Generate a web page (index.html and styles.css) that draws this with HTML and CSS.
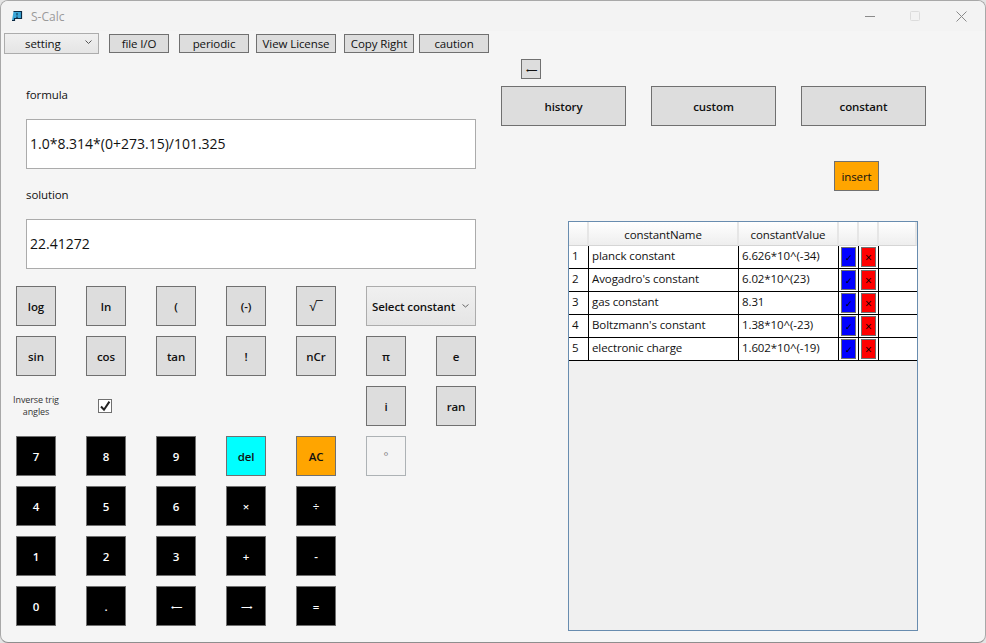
FILE: index.html
```html
<!DOCTYPE html>
<html lang="en">
<head>
<meta charset="utf-8">
<title>S-Calc</title>
<link rel="stylesheet" href="styles.css">
</head>
<body>
<div class="window">
  <header class="titlebar">
    <div class="title-left">
      <svg class="app-icon" width="12" height="12" viewBox="0 0 12 12"><path d="M2.5 1.5h8v7h-7v2H1" fill="#3aa6d8" stroke="#0b2a44" stroke-width="1.2"/><path d="M6 3v2.5M5 7.2h2" stroke="#0b2a44" stroke-width="1" fill="none"/></svg>
      <span class="title-text">S-Calc</span>
    </div>
    <div class="controls">
      <svg class="ctl ctl-min" width="10" height="10" viewBox="0 0 10 10"><path d="M0 5.5h10" stroke="#8a8a8a"/></svg>
      <svg class="ctl ctl-max" width="10" height="10" viewBox="0 0 10 10"><rect x=".5" y=".5" width="9" height="9" rx="1" fill="none" stroke="#dcdcdc"/></svg>
      <svg class="ctl ctl-close" width="11" height="11" viewBox="0 0 11 11"><path d="M.5.5l10 10M10.5.5l-10 10" stroke="#8a8a8a"/></svg>
    </div>
  </header>

  <nav class="toolbar">
    <div class="combo combo-setting"><span class="combo-label">setting</span>
      <svg class="chev" width="7" height="5" viewBox="0 0 7 5"><path d="M.5.5L3.5 3.5 6.5.5" fill="none" stroke="#555"/></svg>
    </div>
    <button class="btn tb w60 ml10">file I/O</button>
    <button class="btn tb w70 ml10">periodic</button>
    <button class="btn tb w80 ml7">View License</button>
    <button class="btn tb w70 ml8">Copy Right</button>
    <button class="btn tb w70 ml5">caution</button>
  </nav>

  <main class="main">
    <section class="left">
      <div class="fields">
        <label class="field-label field-label-first">formula</label>
        <div class="field">1.0*8.314*(0+273.15)/101.325</div>
        <label class="field-label">solution</label>
        <div class="field">22.41272</div>
      </div>
      <div class="keys">
        <button class="btn key">log</button>
        <button class="btn key">ln</button>
        <button class="btn key">(</button>
        <button class="btn key">(-)</button>
        <button class="btn key key-root">√‾</button>
        <div class="combo combo-const"><span>Select constant</span>
          <svg class="chev" width="7" height="4" viewBox="0 0 7 4"><path d="M.5.5L3.5 3 6.5.5" fill="none" stroke="#666"/></svg>
        </div>

        <button class="btn key">sin</button>
        <button class="btn key">cos</button>
        <button class="btn key">tan</button>
        <button class="btn key">!</button>
        <button class="btn key">nCr</button>
        <button class="btn key">π</button>
        <button class="btn key">e</button>

        <div class="inverse">Inverse trig<br>angles</div>
        <div class="check-cell">
          <span class="check"><svg width="12" height="12" viewBox="0 0 12 12"><path d="M2 6.5l3 3.2L10.4 1.6" fill="none" stroke="#222" stroke-width="2"/></svg></span>
        </div>
        <button class="btn key col6">i</button>
        <button class="btn key">ran</button>

        <button class="btn key dark col1">7</button>
        <button class="btn key dark">8</button>
        <button class="btn key dark">9</button>
        <button class="btn key cyan">del</button>
        <button class="btn key orange">AC</button>
        <button class="btn key disabled">°</button>

        <button class="btn key dark col1">4</button>
        <button class="btn key dark">5</button>
        <button class="btn key dark">6</button>
        <button class="btn key dark">×</button>
        <button class="btn key dark">÷</button>

        <button class="btn key dark col1">1</button>
        <button class="btn key dark">2</button>
        <button class="btn key dark">3</button>
        <button class="btn key dark">+</button>
        <button class="btn key dark">-</button>

        <button class="btn key dark col1">0</button>
        <button class="btn key dark">.</button>
        <button class="btn key dark arrow">⟵</button>
        <button class="btn key dark arrow">⟶</button>
        <button class="btn key dark">=</button>
      </div>
    </section>

    <section class="right">
      <button class="btn back">⟵</button>
      <div class="tabs">
        <button class="btn tab">history</button>
        <button class="btn tab">custom</button>
        <button class="btn tab">constant</button>
      </div>
      <button class="btn insert">insert</button>
      <div class="grid-box">
        <table class="grid">
          <thead>
            <tr>
              <th class="c-idx"></th>
              <th class="c-name">constantName</th>
              <th class="c-value">constantValue</th>
              <th class="c-act"></th>
              <th class="c-act"></th>
              <th class="c-fill"></th>
            </tr>
          </thead>
          <tbody>
            <tr><td>1</td><td>planck constant</td><td>6.626*10^(-34)</td><td class="act"><span class="ok">✓</span></td><td class="act"><span class="no">×</span></td><td class="fill"></td></tr>
            <tr><td>2</td><td>Avogadro's constant</td><td>6.02*10^(23)</td><td class="act"><span class="ok">✓</span></td><td class="act"><span class="no">×</span></td><td class="fill"></td></tr>
            <tr><td>3</td><td>gas constant</td><td>8.31</td><td class="act"><span class="ok">✓</span></td><td class="act"><span class="no">×</span></td><td class="fill"></td></tr>
            <tr><td>4</td><td>Boltzmann's constant</td><td>1.38*10^(-23)</td><td class="act"><span class="ok">✓</span></td><td class="act"><span class="no">×</span></td><td class="fill"></td></tr>
            <tr><td>5</td><td>electronic charge</td><td>1.602*10^(-19)</td><td class="act"><span class="ok">✓</span></td><td class="act"><span class="no">×</span></td><td class="fill"></td></tr>
          </tbody>
        </table>
      </div>
    </section>
  </main>
</div>
</body>
</html>
```

FILE: styles.css
```css
* { box-sizing: border-box; }
html, body { margin: 0; padding: 0; height: 100%; background: #e4e4e4; }
body {
  font-family: "Open Sans", "Noto Sans", "Liberation Sans", sans-serif;
  font-size: 11.5px;
  letter-spacing: -0.1px;
  color: #111;
  overflow: hidden;
}
.window {
  width: 986px;
  height: 643px;
  background: #f5f5f5;
  border: 1px solid #a8a8a8;
  border-bottom-color: #8e8e8e;
  border-radius: 8px;
  overflow: hidden;
  display: flex;
  flex-direction: column;
}
.titlebar {
  height: 30px;
  background: #f3f3f3;
  display: flex;
  justify-content: space-between;
  align-items: center;
  flex: none;
}
.title-left { display: flex; align-items: center; padding-left: 10px; }
.app-icon { display: block; }
.title-text { margin-left: 8px; color: #9a9a9a; font-size: 12px; letter-spacing: 0; }
.controls { display: flex; align-items: center; padding-right: 18px; }
.ctl { display: block; }
.ctl-max { margin-left: 35px; }
.ctl-close { margin-left: 36px; }

.toolbar {
  display: flex;
  align-items: center;
  height: 21px;
  margin-top: 2px;
  padding-left: 3px;
  flex: none;
}
.btn {
  font-family: inherit;
  font-size: 11.5px;
  letter-spacing: inherit;
  background: #dddddd;
  border: 1px solid #707070;
  color: #111;
  padding: 0;
  margin: 0;
  display: flex;
  align-items: center;
  justify-content: center;
}
.tb { height: 19px; white-space: nowrap; }
.w60 { width: 60px; }
.w70 { width: 70px; }
.w80 { width: 80px; }
.ml5 { margin-left: 5px; }
.ml7 { margin-left: 7px; }
.ml8 { margin-left: 8px; }
.ml10 { margin-left: 10px; }

.combo {
  background: linear-gradient(#f0f0f0, #e5e5e5);
  border: 1px solid #acacac;
  display: flex;
  align-items: center;
  position: relative;
}
.combo-setting { width: 95px; height: 21px; padding-left: 20px; }
.combo-setting .chev { position: absolute; right: 6px; top: 6px; }
.combo-const {
  grid-column: span 2;
  height: 40px;
  padding-left: 5px;
  font-weight: 600;
  white-space: nowrap;
}
.combo-const .chev { position: absolute; right: 6px; top: 17px; }

.main { display: flex; flex: 1; min-height: 0; }
.left { width: 500px; flex: none; padding-left: 15px; }
.fields { margin-left: 10px; width: 450px; }
.field-label {
  display: block;
  height: 20px;
  line-height: 20px;
  margin-top: 16px;
  margin-bottom: 14px;
}
.field-label-first { margin-top: 31px; }
.field {
  height: 50px;
  background: #fff;
  border: 1px solid #ababab;
  font-size: 14px;
  letter-spacing: 0;
  line-height: 48px;
  padding-left: 3px;
  white-space: nowrap;
}

.keys {
  margin-top: 17px;
  display: grid;
  grid-template-columns: repeat(7, 40px);
  grid-auto-rows: 40px;
  column-gap: 30px;
  row-gap: 10px;
}
.key { font-weight: 600; width: 40px; height: 40px; }
.key-root { font-size: 13px; font-weight: 400; }
.dark { background: #000; color: #fff; }
.arrow { font-size: 8px; font-weight: 400; }
.cyan { background: #00ffff; }
.orange { background: #ffa500; }
.disabled { background: #f4f4f4; border-color: #adb2b5; color: #838383; font-weight: 400; padding-bottom: 2px; }
.col1 { grid-column: 1; }
.col6 { grid-column: 6; }
.inverse {
  display: flex;
  align-items: center;
  justify-content: center;
  text-align: center;
  white-space: nowrap;
  font-size: 9px;
  line-height: 12px;
  padding-bottom: 1px;
  color: #333;
}
.check-cell { display: flex; align-items: center; padding-left: 12px; }
.check {
  width: 14px;
  height: 14px;
  background: #fff;
  border: 1px solid #707070;
  display: block;
}
.check svg { display: block; }

.right { flex: 1; min-width: 0; }
.back {
  width: 20px;
  height: 20px;
  margin-top: 5px;
  margin-left: 20px;
  font-size: 8px;
}
.tabs { display: flex; gap: 25px; margin-top: 7px; }
.tab { width: 125px; height: 40px; font-weight: 600; padding-top: 1px; }
.insert {
  width: 45px;
  height: 30px;
  margin-top: 35px;
  margin-left: 333px;
  background: #ffa500;
  padding-top: 1px;
}
.grid-box {
  width: 350px;
  height: 410px;
  margin-top: 30px;
  margin-left: 67px;
  background: #f0f0f0;
  border: 1px solid #688caf;
}
.grid {
  width: 348px;
  table-layout: fixed;
  border-collapse: separate;
  border-spacing: 0;
}
.grid th {
  height: 24px;
  padding: 2px 0 0;
  font-weight: 400;
  background: linear-gradient(#ffffff, #eeeeee);
  border-right: 2px solid #e6e6e6;
  border-bottom: 1px solid #d5d5d5;
}
.c-idx { width: 20px; }
.c-name { width: 150px; }
.c-value { width: 100px; }
.c-act { width: 20px; }
.grid td {
  height: 23px;
  padding: 0 0 3px 3px;
  background: #fff;
  border-right: 1px solid #000;
  border-bottom: 1px solid #000;
  white-space: nowrap;
  overflow: hidden;
}
.grid td.fill { border-right: 0; }
.grid td.act { padding: 0; }
.ok, .no {
  display: flex;
  align-items: center;
  justify-content: center;
  width: 15px;
  height: 20px;
  margin-left: 2px;
  border: 1px solid #707070;
  color: #000;
}
.ok { background: #0000ff; font-size: 9px; }
.no { background: #ff0000; font-size: 12px; }
```
